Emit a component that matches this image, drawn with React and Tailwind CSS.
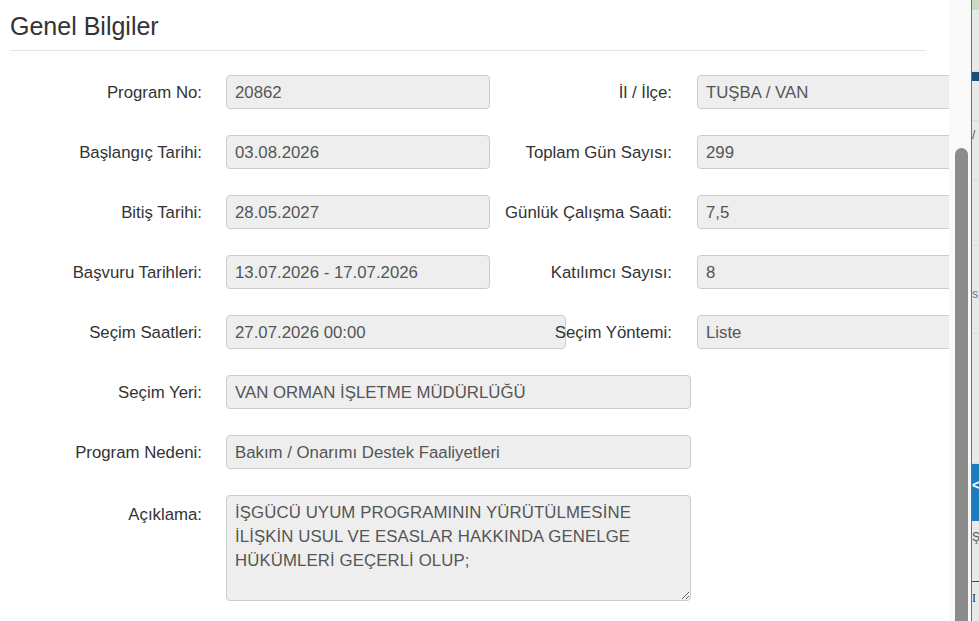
import React from 'react'

const font = { fontFamily: '"Liberation Sans", Arial, sans-serif' }

// Two-column rows of the "Genel Bilgiler" form
const pairRows = [
  { label: 'Program No:', value: '20862', rightLabel: 'İl / İlçe:', rightValue: 'TUŞBA / VAN' },
  { label: 'Başlangıç Tarihi:', value: '03.08.2026', rightLabel: 'Toplam Gün Sayısı:', rightValue: '299' },
  { label: 'Bitiş Tarihi:', value: '28.05.2027', rightLabel: 'Günlük Çalışma Saati:', rightValue: '7,5' },
  { label: 'Başvuru Tarihleri:', value: '13.07.2026 - 17.07.2026', rightLabel: 'Katılımcı Sayısı:', rightValue: '8' },
  { label: 'Seçim Saatleri:', value: '27.07.2026 00:00', rightLabel: 'Seçim Yöntemi:', rightValue: 'Liste', wide: true },
]

const singleRows = [
  { label: 'Seçim Yeri:', value: 'VAN ORMAN İŞLETME MÜDÜRLÜĞÜ' },
  { label: 'Program Nedeni:', value: 'Bakım / Onarımı Destek Faaliyetleri' },
]

const Field = ({ value, className = '' }) => (
  <div
    className={`h-[34px] flex items-center px-[8px] pt-[2px] bg-[#eeeeee] border border-[#cccccc] rounded-[4px] text-[16.8px] text-[#555555] whitespace-nowrap shrink-0 ${className}`}
  >
    {value}
  </div>
)

const Label = ({ children, className = '' }) => (
  <div className={`h-[34px] flex items-center justify-end pt-[2px] text-[16.8px] text-[#333333] whitespace-nowrap shrink-0 ${className}`}>
    {children}
  </div>
)

export default function App() {
  return (
    <div className="w-[979px] h-[621px] overflow-hidden flex bg-white" style={font}>
      {/* modal body */}
      <div className="w-[949px] h-full overflow-hidden shrink-0 pl-[10px] pt-[13px]">
        <h2 className="text-[25px] leading-[26px] text-[#333333] font-normal">Genel Bilgiler</h2>
        <div className="w-[916px] mt-[11px] border-t border-[#e5e5e5]" />

        <div className="mt-[24px] flex flex-col gap-[26px]">
          {pairRows.map((row) => (
            <div key={row.label} className="flex">
              <Label className="w-[192px]">{row.label}</Label>
              <div className="w-[288px] pl-[24px] shrink-0">
                <Field value={row.value} className={row.wide ? 'w-[340px]' : 'w-[264px]'} />
              </div>
              <Label className="w-[182px]">{row.rightLabel}</Label>
              <div className="pl-[25px] shrink-0">
                <Field value={row.rightValue} className="w-[264px]" />
              </div>
            </div>
          ))}

          {singleRows.map((row) => (
            <div key={row.label} className="flex">
              <Label className="w-[192px]">{row.label}</Label>
              <div className="pl-[24px] shrink-0">
                <Field value={row.value} className="w-[465px]" />
              </div>
            </div>
          ))}

          <div className="flex">
            <Label className="w-[192px] items-start pt-[7px] h-auto">Açıklama:</Label>
            <div className="pl-[24px] shrink-0">
              <textarea
                readOnly
                rows={4}
                className="block w-[465px] h-[106px] px-[8px] pt-[5px] bg-[#eeeeee] border border-[#cccccc] rounded-[4px] text-[16.8px] leading-[24px] tracking-[0.1px] text-[#555555] outline-none"
                style={font}
                defaultValue="İŞGÜCÜ UYUM PROGRAMININ YÜRÜTÜLMESİNE İLİŞKİN USUL VE ESASLAR HAKKINDA GENELGE HÜKÜMLERİ GEÇERLİ OLUP;"
              />
            </div>
          </div>
        </div>
      </div>

      {/* scrollbar */}
      <div className="w-[22px] h-full bg-[#f9f9f9] shrink-0 flex flex-col pl-[6px] pt-[148px]">
        <div className="w-[13px] flex-1 bg-[#8c8c8c] rounded-t-full" />
      </div>
      <div className="w-px h-full bg-[#6f6f6f] shrink-0" />

      {/* page behind the modal, only a sliver shows */}
      <div className="flex-1 h-full bg-[#e9e9e9] flex flex-col text-[12px] leading-none overflow-hidden">
        <div className="h-[10px] bg-[#c9dcc3]" />
        <div className="h-[62px] border-b border-[#dcdcdc]" />
        <div className="h-[9px] bg-[#1a4f78]" />
        <div className="h-[40px] border-b border-[#dcdcdc]" />
        <div className="h-[60px] pt-[8px] text-[#555555] border-b border-[#dcdcdc]">/</div>
        <div className="h-[65px] border-b border-[#dcdcdc]" />
        <div className="h-[88px] pt-[42px] text-[#3a7fc1] border-b border-[#dcdcdc]">s</div>
        <div className="h-[130px] border-b border-[#dcdcdc]" />
        <div className="h-[57px] bg-[#1f7bc0] pt-[14px] text-white font-bold text-[14px]">&lt;</div>
        <div className="h-[60px] pt-[10px] text-[#555555]">Ş</div>
        <div className="h-px bg-[#444444]" />
        <div className="pt-[10px] text-[#333333]" style={{ fontFamily: '"Liberation Serif", serif' }}>I</div>
      </div>
    </div>
  )
}
